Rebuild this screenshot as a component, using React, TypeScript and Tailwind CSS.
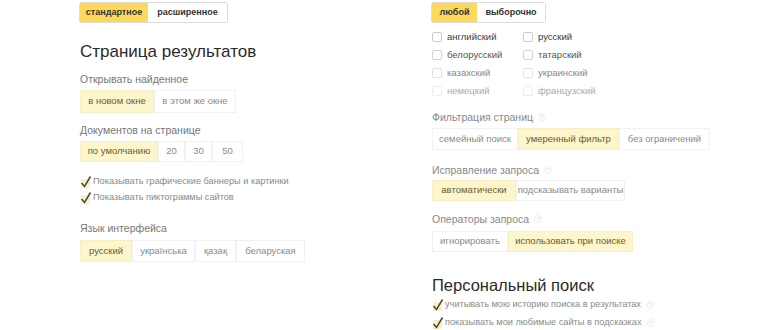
import React from "react"

type Opt = { label: string; w: number; on?: boolean }

function Group({ opts, h = 22 }: { opts: Opt[]; h?: number }) {
    return (
        <div className="flex flex-row">
            {opts.map((o, i) => (
                <div
                    key={i}
                    className={
                        o.on
                            ? "flex items-center justify-center bg-[#fdf5cc] border border-[#f8efc4] text-[#6b5d2a] text-[9.5px]"
                            : "flex items-center justify-center bg-white border border-[#f2f2f2] text-[#8a8a8a] text-[9.5px]"
                    }
                    style={{ width: o.w, height: h }}
                >
                    {o.label}
                </div>
            ))}
        </div>
    )
}

function Toggle({ opts }: { opts: Opt[] }) {
    return (
        <div className="flex flex-row rounded-[2px] shadow-[0_0_0_1px_#dcdcdc]">
            {opts.map((o, i) => (
                <div
                    key={i}
                    className={
                        o.on
                            ? "flex items-center justify-center h-[19px] bg-[#fcd95a] text-[#333] font-bold text-[9px]"
                            : "flex items-center justify-center h-[19px] bg-white text-[#333] font-bold text-[9px]"
                    }
                    style={{ width: o.w }}
                >
                    {o.label}
                </div>
            ))}
        </div>
    )
}

function Q() {
    return (
        <span className="ml-[5px] w-[8px] h-[8px] rounded-full border border-[#eee] text-[6px] leading-none flex items-center justify-center text-[#ddd]">?</span>
    )
}

function Check({ text, q }: { text: string; q?: boolean }) {
    return (
        <div className="flex flex-row items-center h-[16px]">
            <svg width="12" height="14" viewBox="0 0 12 14" className="mr-[1px]">
                <rect x="1" y="4" width="9" height="9" fill="#f7efcd" />
                <path d="M1.5 8 L4.5 11.5 L10.5 1.5" stroke="#4f4a25" strokeWidth="1.5" fill="none" />
            </svg>
            <span className="text-[#8a8a8a] text-[9.2px]">{text}</span>
            {q && <Q />}
        </div>
    )
}

function Box({ text, color, box }: { text: string; color: string; box: string }) {
    return (
        <div className="flex flex-row items-center h-[18px] w-[91px]">
            <div className="w-[10px] h-[10px] rounded-[2px] border mr-[5px]" style={{ borderColor: box }} />
            <span className="text-[9.5px]" style={{ color }}>{text}</span>
        </div>
    )
}

function App() {
    return (
        <div className="w-[770px] h-[330px] bg-white flex flex-row overflow-hidden font-['Liberation_Sans',Arial,sans-serif]">

            {/* Left column */}
            <div className="w-[432px] shrink-0 pl-[80px] pt-[3px] flex flex-col">
                <div className="flex">
                    <Toggle opts={[{ label: "стандартное", w: 68, on: true }, { label: "расширенное", w: 79 }]} />
                </div>

                <h2 className="mt-[19px] text-[17px] leading-[22px] text-[#2a2a2a]">Страница результатов</h2>

                <div className="mt-[8px] text-[10.5px] leading-[16px] text-[#777]">Открывать найденное</div>
                <div className="mt-[3px] flex">
                    <Group opts={[{ label: "в новом окне", w: 74, on: true }, { label: "в этом же окне", w: 82 }]} h={23} />
                </div>

                <div className="mt-[9px] text-[10.5px] leading-[16px] text-[#777]">Документов на странице</div>
                <div className="mt-[3px] flex">
                    <Group opts={[{ label: "по умолчанию", w: 78, on: true }, { label: "20", w: 27 }, { label: "30", w: 27 }, { label: "50", w: 31 }]} h={21} />
                </div>

                <div className="mt-[12px] flex flex-col">
                    <Check text="Показывать графические баннеры и картинки" />
                    <Check text="Показывать пиктограммы сайтов" />
                </div>

                <div className="mt-[14px] text-[10.5px] leading-[16px] text-[#777]">Язык интерфейса</div>
                <div className="mt-[4px] flex">
                    <Group opts={[{ label: "русский", w: 52, on: true }, { label: "українська", w: 63 }, { label: "қазақ", w: 41 }, { label: "беларуская", w: 69 }]} h={22} />
                </div>
            </div>

            {/* Right column */}
            <div className="pt-[3px] flex flex-col">
                <div className="flex">
                    <Toggle opts={[{ label: "любой", w: 45, on: true }, { label: "выборочно", w: 68 }]} />
                </div>

                <div className="mt-[6px] grid grid-cols-[91px_91px]">
                    <Box text="английский" color="#3a3a3a" box="#ccc" />
                    <Box text="русский" color="#3a3a3a" box="#ccc" />
                    <Box text="белорусский" color="#555" box="#d4d4d4" />
                    <Box text="татарский" color="#555" box="#d4d4d4" />
                    <Box text="казахский" color="#888" box="#e2e2e2" />
                    <Box text="украинский" color="#888" box="#e2e2e2" />
                    <Box text="немецкий" color="#aaa" box="#eee" />
                    <Box text="французский" color="#aaa" box="#eee" />
                </div>

                <div className="mt-[9px] flex flex-row items-center text-[10.5px] leading-[16px] text-[#888]">Фильтрация страниц <Q /></div>
                <div className="mt-[3px] flex">
                    <Group opts={[{ label: "семейный поиск", w: 86 }, { label: "умеренный фильтр", w: 101, on: true }, { label: "без ограничений", w: 91 }]} h={22} />
                </div>

                <div className="mt-[12px] flex flex-row items-center text-[10.5px] leading-[16px] text-[#888]">Исправление запроса <Q /></div>
                <div className="mt-[2px] flex">
                    <Group opts={[{ label: "автоматически", w: 84, on: true }, { label: "подсказывать варианты", w: 109 }]} h={21} />
                </div>

                <div className="mt-[10px] flex flex-row items-center text-[10.5px] leading-[16px] text-[#888]">Операторы запроса <Q /></div>
                <div className="mt-[4px] flex">
                    <Group opts={[{ label: "игнорировать", w: 76 }, { label: "использовать при поиске", w: 125, on: true }]} h={21} />
                </div>

                <h2 className="mt-[22px] text-[16.5px] leading-[22px] text-[#2a2a2a]">Персональный поиск</h2>
                <div className="flex flex-col">
                    <div className="h-[18px] flex items-center"><Check text="учитывать мою историю поиска в результатах" q /></div>
                    <div className="h-[18px] flex items-center"><Check text="показывать мои любимые сайты в подсказках" q /></div>
                </div>
            </div>
        </div>
    )
}

export default App
